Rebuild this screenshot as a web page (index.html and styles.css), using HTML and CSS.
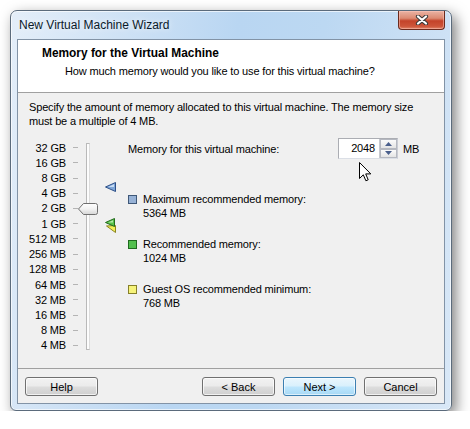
FILE: index.html
```html
<!DOCTYPE html>
<html>
<head>
<meta charset="utf-8">
<title>New Virtual Machine Wizard</title>
<link rel="stylesheet" href="styles.css">
</head>
<body>
<div class="window">
  <div class="titlebar">
    <span class="title">New Virtual Machine Wizard</span>
    <div class="close">
      <svg width="14" height="10" viewBox="0 0 14 10">
        <path d="M3 1.5 L11 8.5 M11 1.5 L3 8.5" stroke="#3a3a3a" stroke-width="4.2" stroke-linecap="round"/>
        <path d="M3 1.5 L11 8.5 M11 1.5 L3 8.5" stroke="#ffffff" stroke-width="2.2" stroke-linecap="round"/>
      </svg>
    </div>
  </div>
  <div class="client">
    <div class="header">
      <div class="heading">Memory for the Virtual Machine</div>
      <div class="subheading">How much memory would you like to use for this virtual machine?</div>
    </div>
    <div class="body">
      <p class="intro">Specify the amount of memory allocated to this virtual machine. The memory size<br>must be a multiple of 4 MB.</p>
      <div class="main">
        <div class="slider">
          <div class="scale">
            <div class="row"><span class="lbl">32 GB</span><span class="tick"></span></div>
            <div class="row"><span class="lbl">16 GB</span><span class="tick"></span></div>
            <div class="row"><span class="lbl">8 GB</span><span class="tick"></span></div>
            <div class="row"><span class="lbl">4 GB</span><span class="tick"></span></div>
            <div class="row"><span class="lbl">2 GB</span><span class="tick"></span></div>
            <div class="row"><span class="lbl">1 GB</span><span class="tick"></span></div>
            <div class="row"><span class="lbl">512 MB</span><span class="tick"></span></div>
            <div class="row"><span class="lbl">256 MB</span><span class="tick"></span></div>
            <div class="row"><span class="lbl">128 MB</span><span class="tick"></span></div>
            <div class="row"><span class="lbl">64 MB</span><span class="tick"></span></div>
            <div class="row"><span class="lbl">32 MB</span><span class="tick"></span></div>
            <div class="row"><span class="lbl">16 MB</span><span class="tick"></span></div>
            <div class="row"><span class="lbl">8 MB</span><span class="tick"></span></div>
            <div class="row"><span class="lbl">4 MB</span><span class="tick"></span></div>
          </div>
          <div class="track"></div>
          <svg class="thumb" width="20" height="12" viewBox="0 0 20 12">
            <defs>
              <linearGradient id="tg" x1="0" y1="0" x2="0" y2="1">
                <stop offset="0" stop-color="#ffffff"/>
                <stop offset="0.5" stop-color="#f2f2f2"/>
                <stop offset="1" stop-color="#d6d6d6"/>
              </linearGradient>
            </defs>
            <path d="M0.5 6 L5.5 0.5 H17.5 Q19.5 0.5 19.5 2.5 V9.5 Q19.5 11.5 17.5 11.5 H5.5 Z" fill="url(#tg)" stroke="#6f6f6f" stroke-width="1"/>
          </svg>
          <svg class="mark mark-blue" width="11" height="10" viewBox="0 0 11 10">
            <path d="M0.5 5 L10.5 0.5 V9.5 Z" fill="#7ea6d8" stroke="#2d4f87" stroke-width="1"/>
            <path d="M3 5 L9 2.3 V5 Z" fill="#c8dcf3"/>
          </svg>
          <svg class="mark mark-yellow" width="10" height="8" viewBox="0 0 10 8">
            <path d="M0.5 1 L9.5 0.5 V7.5 Z" fill="#f3f055" stroke="#8a8420" stroke-width="1"/>
          </svg>
          <svg class="mark mark-green" width="10" height="9" viewBox="0 0 10 9">
            <path d="M0.5 4.5 L9.5 0.5 V8.5 Z" fill="#58c24a" stroke="#226b1c" stroke-width="1"/>
            <path d="M3 4.5 L8 2.3 V4.5 Z" fill="#b3eaa9"/>
          </svg>
        </div>
        <div class="panel">
          <div class="memrow">
            <span class="memlabel">Memory for this virtual machine:</span>
            <div class="spin">
              <span class="spinval">2048</span>
              <div class="spinbtns">
                <div class="sbtn"><svg width="7" height="4" viewBox="0 0 7 4"><path d="M0 4 L3.5 0 L7 4 Z" fill="#4a5f8c"/></svg></div>
                <div class="sbtn"><svg width="7" height="4" viewBox="0 0 7 4"><path d="M0 0 L3.5 4 L7 0 Z" fill="#4a5f8c"/></svg></div>
              </div>
            </div>
            <span class="unit">MB</span>
            <svg class="cursor" width="13" height="21" viewBox="0 0 13 21">
              <path d="M0.5 0.5 V16.5 L4.3 12.8 L6.9 18.8 L9.2 17.8 L6.7 11.9 H11.8 Z" fill="#ffffff" stroke="#000000" stroke-width="1" stroke-linejoin="miter"/>
            </svg>
          </div>
          <div class="legend first">
            <span class="sw sw-blue"></span>
            <div class="ltext"><div>Maximum recommended memory:</div><div>5364 MB</div></div>
          </div>
          <div class="legend">
            <span class="sw sw-green"></span>
            <div class="ltext"><div>Recommended memory:</div><div>1024 MB</div></div>
          </div>
          <div class="legend">
            <span class="sw sw-yellow"></span>
            <div class="ltext"><div>Guest OS recommended minimum:</div><div>768 MB</div></div>
          </div>
        </div>
      </div>
    </div>
    <div class="footer">
      <button class="btn">Help</button>
      <div class="spacer"></div>
      <button class="btn">&lt; Back</button>
      <button class="btn btn-default">Next &gt;</button>
      <button class="btn">Cancel</button>
    </div>
  </div>
</div>
</body>
</html>
```

FILE: styles.css
```css
html, body {
  margin: 0;
  padding: 0;
  background: #ffffff;
}

body {
  font-family: "Liberation Sans", Arial, sans-serif;
  font-size: 11px;
  letter-spacing: -0.15px;
  color: #000;
}

.window {
  margin: 10px 0 0 10px;
  width: 440px;
  height: 399px;
  border: 1px solid #5b6b7c;
  border-radius: 7px 7px 6px 6px;
  background: linear-gradient(100deg, #e4eef9 0%, #cfe2f5 22%, #b9d6f2 45%, #bcd8f2 62%, #cde1f5 85%, #d9e8f7 100%);
  box-shadow: 4px 5px 14px rgba(0, 0, 0, 0.5), inset 0 0 0 1px rgba(255, 255, 255, 0.65);
  display: flex;
  flex-direction: column;
}

.titlebar {
  height: 28px;
  display: flex;
  align-items: flex-start;
}

.title {
  font-family: "Liberation Sans", Arial, sans-serif;
  font-size: 12px;
  letter-spacing: 0;
  color: #0b1a2a;
  margin: 7px 0 0 8px;
  text-shadow: 0 0 6px rgba(255, 255, 255, 0.9);
}

.close {
  margin-left: auto;
  margin-right: 6px;
  width: 45px;
  height: 18px;
  border: 1px solid #6b2a1d;
  border-top: none;
  border-radius: 0 0 4px 4px;
  background: linear-gradient(#eab3a4 0%, #dc8a72 40%, #c4432a 55%, #cd553a 85%, #e0866a 100%);
  box-shadow: inset 0 0 0 1px rgba(255, 200, 190, 0.5);
  display: flex;
  align-items: center;
  justify-content: center;
}

.client {
  margin: 0 6px 6px 6px;
  flex: 1;
  border: 1px solid #8293a6;
  background: #f0f0f0;
  display: flex;
  flex-direction: column;
}

.header {
  height: 52px;
  background: #ffffff;
  border-bottom: 1px solid #a0a0a0;
  box-sizing: content-box;
}

.heading {
  font-weight: bold;
  font-size: 11.9px;
  letter-spacing: 0;
  line-height: 14px;
  margin: 6px 0 0 24px;
}

.subheading {
  line-height: 14px;
  margin: 4px 0 0 47px;
}

.body {
  flex: 1;
  border-bottom: 1px solid #a0a0a0;
  padding: 7px 0 0 11px;
}

.intro {
  margin: 0;
  line-height: 14px;
}

.main {
  display: flex;
  margin-top: 12px;
}

.slider {
  position: relative;
  display: flex;
  width: 99px;
}

.scale {
  display: flex;
  flex-direction: column;
}

.row {
  height: 15.23px;
  display: flex;
  align-items: center;
}

.lbl {
  width: 37px;
  text-align: right;
  white-space: nowrap;
}

.tick {
  width: 5px;
  height: 1px;
  background: #b4b4b4;
  margin-left: 7px;
}

.track {
  margin: 3px 0 0 8px;
  width: 2px;
  height: 205px;
  border: 1px solid #b9b9b9;
  border-right-color: #dcdcdc;
  background: #fcfcfc;
}

.thumb {
  position: absolute;
  left: 49px;
  top: 63px;
}

.mark {
  position: absolute;
}

.mark-blue {
  left: 76px;
  top: 42px;
}

.mark-green {
  left: 76px;
  top: 78px;
}

.mark-yellow {
  left: 77px;
  top: 85px;
}

.panel {
  display: flex;
  flex-direction: column;
}

.memrow {
  position: relative;
  display: flex;
  align-items: center;
  height: 21px;
  margin-top: -2px;
}

.memlabel {
  width: 210px;
}

.spin {
  display: flex;
  height: 19px;
  border: 1px solid #abadb3;
  border-right-color: #c9ccd4;
  border-bottom-color: #dbdfe6;
  background: #fff;
}

.spinval {
  width: 36px;
  text-align: right;
  padding-right: 4px;
  line-height: 19px;
}

.spinbtns {
  display: flex;
  flex-direction: column;
  width: 17px;
  border-left: 1px solid #c6c9d0;
  background: #f0f0f0;
}

.sbtn {
  flex: 1;
  display: flex;
  align-items: center;
  justify-content: center;
  border: 1px solid #b5b8c0;
  background: linear-gradient(#fbfbfb, #e4e4e4);
}

.unit {
  margin-left: 5px;
}

.cursor {
  position: absolute;
  left: 231px;
  top: 24px;
}

.legend {
  display: flex;
  margin-top: 17px;
}

.legend.first {
  margin-top: 33px;
}

.sw {
  width: 7px;
  height: 7px;
  border: 1px solid #444;
  margin: 3px 6px 0 0;
}

.sw-blue {
  background: #97b2d6;
  border-color: #3f5878;
}

.sw-green {
  background: #52c04e;
  border-color: #1f6a1f;
}

.sw-yellow {
  background: #f6f37a;
  border-color: #86802a;
}

.ltext {
  line-height: 14px;
}

.footer {
  height: 34px;
  display: flex;
  align-items: flex-start;
  padding: 8px 7px 0 7px;
  box-sizing: border-box;
}

.spacer {
  flex: 1;
}

.btn {
  width: 73px;
  height: 19px;
  padding: 0;
  margin-left: 8px;
  font-family: "Liberation Sans", Arial, sans-serif;
  font-size: 11px;
  color: #000;
  border: 1px solid #707070;
  border-radius: 3px;
  background: linear-gradient(#f2f2f2 0%, #ebebeb 48%, #dddddd 52%, #cfcfcf 100%);
  box-shadow: inset 0 0 0 1px rgba(255, 255, 255, 0.7);
}

.btn:first-child {
  margin-left: 0;
}

.btn-default {
  border-color: #3c7fb1;
  background: linear-gradient(#eaf6fd 0%, #d9f0fc 48%, #bee6fd 52%, #a7d9f5 100%);
  box-shadow: inset 0 0 0 1px rgba(255, 255, 255, 0.6);
}
```
